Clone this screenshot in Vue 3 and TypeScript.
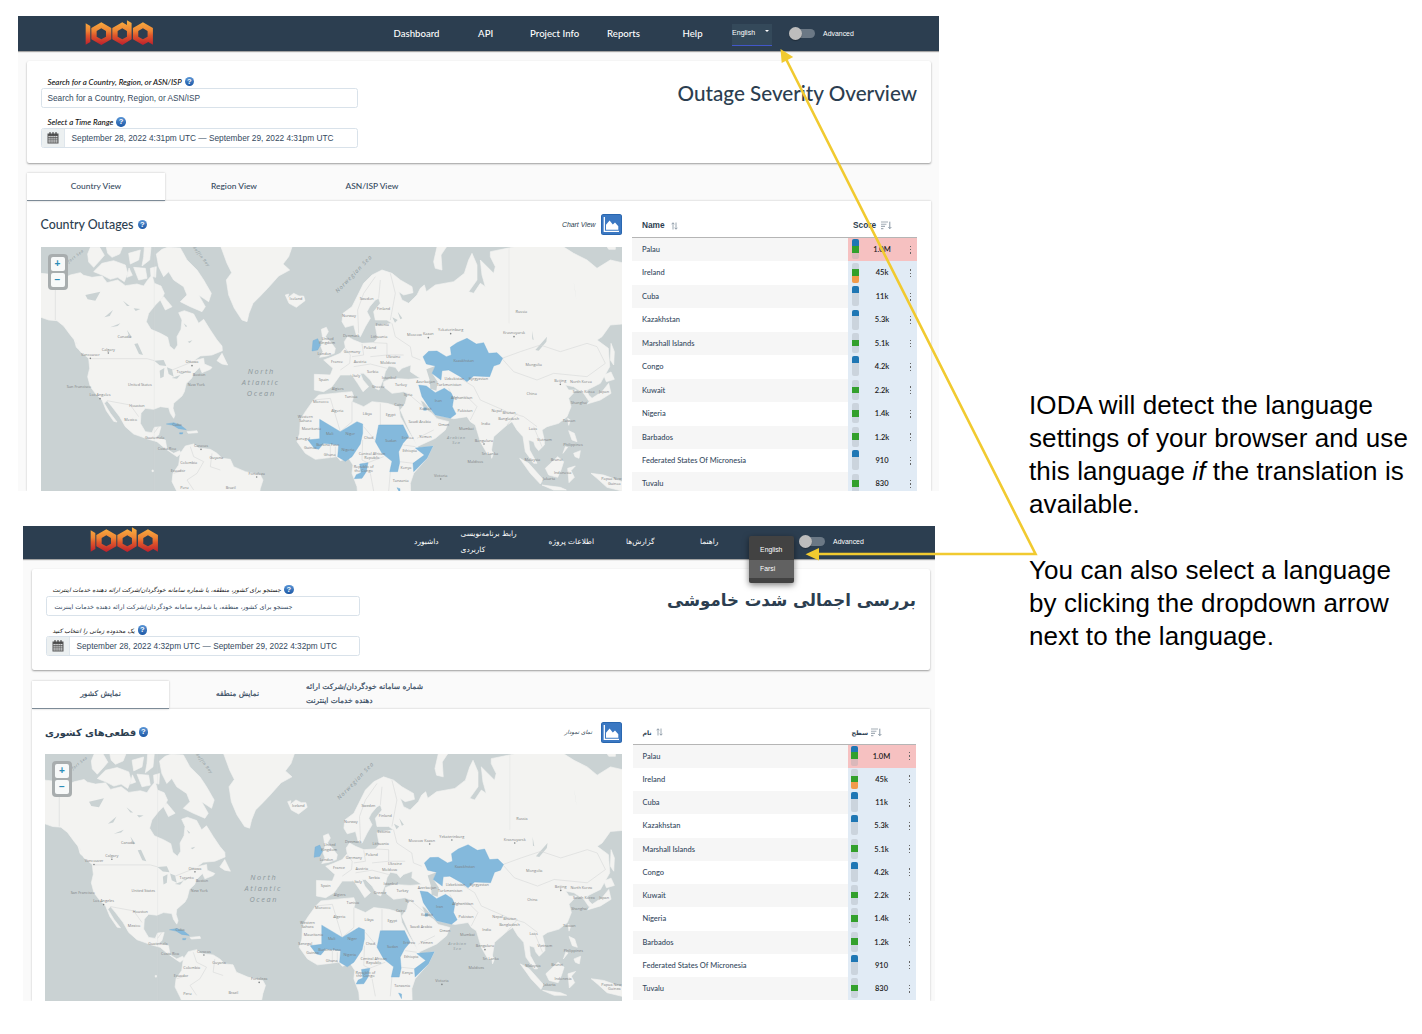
<script setup lang="ts">
interface NavItem { text: string; width: number }
interface Shot {
  id: string
  lang: 'en' | 'fa'
  nav: NavItem[]
  searchLabel: string
  searchPlaceholder: string
  timeLabel: string
  time: string
  title: string
  tabs: string[]
  heading: string
  chart: string
  name: string
  score: string
}
interface Row { name: string; score: string; bars: string[] }
interface Label { t: string; x: number; y: number; dot?: boolean }

const shots: Shot[] = [
  {
    id: 'one',
    lang: 'en',
    nav: [
      { text: 'Dashboard', width: 84.5 },
      { text: 'API', width: 52 },
      { text: 'Project Info', width: 77 },
      { text: 'Reports', width: 75.5 },
      { text: 'Help', width: 49.5 },
    ],
    searchLabel: 'Search for a Country, Region, or ASN/ISP',
    searchPlaceholder: 'Search for a Country, Region, or ASN/ISP',
    timeLabel: 'Select a Time Range',
    time: 'September 28, 2022 4:31pm UTC — September 29, 2022 4:31pm UTC',
    title: 'Outage Severity Overview',
    tabs: ['Country View', 'Region View', 'ASN/ISP View'],
    heading: 'Country Outages',
    chart: 'Chart View',
    name: 'Name',
    score: 'Score',
  },
  {
    id: 'two',
    lang: 'fa',
    nav: [
      { text: 'داشبورد', width: 46.5 },
      { text: 'رابط برنامه‌نویسی\nکاربردی', width: 88 },
      { text: 'اطلاعات پروژه', width: 77.5 },
      { text: 'گزارش‌ها', width: 74 },
      { text: 'راهنما', width: 50 },
    ],
    searchLabel: 'جستجو برای کشور، منطقه، یا شماره سامانه خودگردان/شرکت ارائه دهنده خدمات اینترنت',
    searchPlaceholder: 'جستجو برای کشور، منطقه، یا شماره سامانه خودگردان/شرکت ارائه دهنده خدمات اینترنت',
    timeLabel: 'یک محدوده زمانی را انتخاب کنید',
    time: 'September 28, 2022 4:32pm UTC — September 29, 2022 4:32pm UTC',
    title: 'بررسی اجمالی شدت خاموشی',
    tabs: ['نمایش کشور', 'نمایش منطقه', 'شماره سامانه خودگردان/شرکت ارائه\nدهنده خدمات اینترنت'],
    heading: 'قطعی‌های کشوری',
    chart: 'نمای نمودار',
    name: 'نام',
    score: 'سطح',
  },
]

const B = '#1f77b4'
const G = '#33a02c'
const O = '#f29b4b'
const N = ''
const rows: Row[] = [
  { name: 'Palau', score: '1.0M', bars: [B, G, N] },
  { name: 'Ireland', score: '45k', bars: [N, G, O] },
  { name: 'Cuba', score: '11k', bars: [B, N, N] },
  { name: 'Kazakhstan', score: '5.3k', bars: [B, N, N] },
  { name: 'Marshall Islands', score: '5.1k', bars: [N, G, N] },
  { name: 'Congo', score: '4.2k', bars: [B, N, N] },
  { name: 'Kuwait', score: '2.2k', bars: [N, G, N] },
  { name: 'Nigeria', score: '1.4k', bars: [N, G, N] },
  { name: 'Barbados', score: '1.2k', bars: [N, G, N] },
  { name: 'Federated States Of Micronesia', score: '910', bars: [B, N, N] },
  { name: 'Tuvalu', score: '830', bars: [N, G, N] },
]

const westLabels: Label[] = [
  { t: 'Canada', x: 282, y: 294 }, { t: 'Calgary', x: 234, y: 332, dot: true },
  { t: 'Vancouver', x: 180, y: 348, dot: true }, { t: 'United States', x: 329, y: 437 },
  { t: 'San Francisco', x: 146, y: 445 }, { t: 'Los Angeles', x: 209, y: 469, dot: true },
  { t: 'Houston', x: 320, y: 501 }, { t: 'Mexico', x: 301, y: 544 }, { t: 'Cuba', x: 440, y: 557 },
  { t: 'Guatemala', x: 373, y: 597 }, { t: 'Costa Rica', x: 410, y: 629 }, { t: 'Caracas', x: 512, y: 621, dot: true },
  { t: 'Colombia', x: 475, y: 671 }, { t: 'Guyana', x: 558, y: 656 }, { t: 'Ecuador', x: 443, y: 696 },
  { t: 'Peru', x: 462, y: 748 }, { t: 'Brazil', x: 601, y: 746 }, { t: 'Fortaleza', x: 679, y: 704, dot: true },
  { t: 'Ottawa', x: 485, y: 370, dot: true }, { t: 'Toronto', x: 460, y: 398 }, { t: 'Boston', x: 506, y: 409 },
  { t: 'New York', x: 498, y: 437 }, { t: 'Iceland', x: 797, y: 181 },
]
const eastLabels: Label[] = [
  { t: 'Sweden', x: 139, y: 181 }, { t: 'Finland', x: 190, y: 211 }, { t: 'Norway', x: 86, y: 230 },
  { t: 'Estonia', x: 186, y: 259 }, { t: 'Denmark', x: 93, y: 290 }, { t: 'Lithuania', x: 176, y: 295 },
  { t: 'Poland', x: 149, y: 328 }, { t: 'Germany', x: 95, y: 338 }, { t: 'Ukraine', x: 219, y: 355 },
  { t: 'United', x: 22, y: 300 }, { t: 'Kingdom', x: 20, y: 313 }, { t: 'London', x: 12, y: 345 },
  { t: 'France', x: 50, y: 368 }, { t: 'Austria', x: 119, y: 370 }, { t: 'Moldova', x: 203, y: 373 },
  { t: 'Serbia', x: 157, y: 398 }, { t: 'Italy', x: 108, y: 412 }, { t: 'Istanbul', x: 206, y: 417 },
  { t: 'Spain', x: 10, y: 422 }, { t: 'Greece', x: 174, y: 443 }, { t: 'Turkey', x: 242, y: 438 },
  { t: 'Algiers', x: 52, y: 449 }, { t: 'Tunisia', x: 92, y: 475 }, { t: 'Syria', x: 263, y: 469 },
  { t: 'Azerbaijan', x: 316, y: 429 }, { t: 'Turkmenistan', x: 386, y: 438 }, { t: 'Uzbekistan', x: 402, y: 419 },
  { t: 'Kyrgyzstan', x: 474, y: 421 }, { t: 'Kazakhstan', x: 430, y: 365 }, { t: 'Iran', x: 354, y: 486 },
  { t: 'Afghanistan', x: 424, y: 477 }, { t: 'Pakistan', x: 434, y: 515 }, { t: 'Nepal', x: 529, y: 515 },
  { t: 'Bhutan', x: 566, y: 521 }, { t: 'India', x: 496, y: 555 }, { t: 'Bangladesh', x: 565, y: 541 },
  { t: 'Mumbai', x: 438, y: 571 }, { t: 'Bengaluru', x: 491, y: 605, dot: true }, { t: 'Sri Lanka', x: 509, y: 644 },
  { t: 'Maldives', x: 465, y: 669 }, { t: 'Victoria', x: 361, y: 710, dot: true }, { t: 'Russia', x: 603, y: 220 },
  { t: 'Moscow', x: 282, y: 287 }, { t: 'Kazan', x: 324, y: 286, dot: true }, { t: 'Yekaterinburg', x: 391, y: 274, dot: true },
  { t: 'Krasnoyarsk', x: 581, y: 283, dot: true }, { t: 'Mongolia', x: 640, y: 377 }, { t: 'China', x: 634, y: 465 },
  { t: 'Beijing', x: 720, y: 426, dot: true }, { t: 'North Korea', x: 782, y: 430 }, { t: 'South Korea', x: 790, y: 458 },
  { t: 'Japan', x: 851, y: 458 }, { t: 'Shanghai', x: 776, y: 491 }, { t: 'Taiwan', x: 746, y: 545 },
  { t: 'Laos', x: 638, y: 569 }, { t: 'Vietnam', x: 672, y: 604 }, { t: 'Philippines', x: 758, y: 619 },
  { t: 'Malaysia', x: 636, y: 663 }, { t: 'Brunei', x: 709, y: 662 }, { t: 'Indonesia', x: 727, y: 703 },
  { t: 'Jakarta', x: 686, y: 721 }, { t: 'Papua New', x: 873, y: 721 }, { t: 'Guinea', x: 882, y: 735 },
  { t: 'Morocco', x: 1, y: 488 }, { t: 'Algeria', x: 51, y: 516 }, { t: 'Libya', x: 141, y: 524 },
  { t: 'Egypt', x: 211, y: 527 }, { t: 'Cairo', x: 236, y: 498 }, { t: 'Kuwait', x: 316, y: 509 },
  { t: 'Saudi Arabia', x: 298, y: 548 }, { t: 'Oman', x: 370, y: 559 }, { t: 'Yemen', x: 315, y: 594 },
  { t: 'Western', x: -45, y: 535 }, { t: 'Sahara', x: -45, y: 546 }, { t: 'Mauritania', x: -27, y: 570 },
  { t: 'Mali', x: 28, y: 584 }, { t: 'Niger', x: 90, y: 584 }, { t: 'Chad', x: 145, y: 597 },
  { t: 'Sudan', x: 212, y: 606 }, { t: 'Eritrea', x: 262, y: 596 }, { t: 'Senegal', x: -52, y: 599 },
  { t: 'Burkina Faso', x: 22, y: 617 }, { t: 'Guinea', x: -30, y: 626 }, { t: 'Nigeria', x: 83, y: 632 },
  { t: 'Ghana', x: 28, y: 649 }, { t: 'Central African', x: 155, y: 644 }, { t: 'Republic', x: 155, y: 656 },
  { t: 'Ethiopia', x: 268, y: 637 }, { t: 'Kenya', x: 257, y: 686 }, { t: 'Republic of', x: 130, y: 685 },
  { t: 'the Congo', x: 130, y: 696 }, { t: 'Tanzania', x: 241, y: 726 },
]
</script>

<template>
  <main class="slide">
    <div class="shots">
      <section v-for="s in shots" :key="s.id" class="shot" :class="[s.id, s.lang]">
        <header class="bar">
          <svg class="logo" viewBox="226 28 206 76">
            <defs>
              <linearGradient :id="'g' + s.id" x1="0" y1="30" x2="0" y2="103" gradientUnits="userSpaceOnUse">
                <stop offset="0" stop-color="#f9b040" />
                <stop offset=".42" stop-color="#ee8434" />
                <stop offset=".6" stop-color="#e0592b" />
                <stop offset="1" stop-color="#bd1f2d" />
              </linearGradient>
            </defs>
            <g :fill="`url(#g${s.id})`" fill-rule="evenodd">
              <path d="M228 38l14 8v48l-14 8z" />
              <path d="M275 35l30 17v34l-30 17-30-17V52zM275 53l-14 8v17l14 8 14-8V61z" />
              <path d="M338 35l14 8V29l14 8v49l-28 17-30-17V52zM338 53l-14 8v17l14 8 14-8V61z" />
              <path d="M400 35l30 17v50l-14-8-16 9-30-17V52zM400 53l-14 8v17l14 8 14-8V61z" />
            </g>
          </svg>
          <nav class="nav">
            <a v-for="n in s.nav" :key="n.text" :style="{ width: n.width + 'px' }">{{ n.text }}</a>
          </nav>
          <div class="langbox">
            <div v-if="s.lang === 'en'" class="select"><span>English</span><i class="caret"></i></div>
            <ul v-else class="menu"><li>English</li><li class="on">Farsi</li></ul>
          </div>
          <span class="toggle"><i></i></span>
          <span class="adv">Advanced</span>
        </header>

        <div class="card">
          <div class="form">
            <label class="lbl l1"><span>{{ s.searchLabel }}</span><b class="q">?</b></label>
            <div class="input ph"><span>{{ s.searchPlaceholder }}</span></div>
            <label class="lbl l2"><span>{{ s.timeLabel }}</span><b class="q">?</b></label>
            <div class="input range">
              <span class="cal">
                <svg viewBox="0 0 12 12" width="12" height="12">
                  <path d="M.5 1.5h11v10H.5z" fill="#555" />
                  <path d="M3 0v2.5M6 0v2.5M9 0v2.5" stroke="#333" stroke-width="1" />
                  <path d="M1.5 4.5h9M1.5 6.3h9M1.5 8.1h9M1.5 9.9h9" stroke="#e8eaeb" stroke-width="1.1" stroke-dasharray="1.3 .6" />
                </svg>
              </span>
              <span class="time">{{ s.time }}</span>
            </div>
          </div>
          <h1>{{ s.title }}</h1>
        </div>

        <div class="tabs">
          <div v-for="(t, i) in s.tabs" :key="t" class="tab" :class="{ active: i === 0 }"><span>{{ t }}</span></div>
        </div>

        <div class="panel">
          <div class="left">
            <div class="head">
              <h2>{{ s.heading }}</h2><b class="q">?</b>
              <em>{{ s.chart }}</em>
              <svg class="chartbtn" viewBox="0 0 21 21">
                <rect width="21" height="21" rx="2.5" fill="#2360a9" />
                <rect x=".7" y=".7" width="19.6" height="19.6" rx="2" fill="#3b78c2" />
                <path d="M3.3 3v14.3H18" fill="none" stroke="#fff" stroke-width="1.3" />
                <path d="M5 15.7v-5l3.6-4.2 3.2 4 2.2-1.9 3.3 3.6v3.5z" fill="#fff" />
              </svg>
            </div>
            <div class="map">
              <svg viewBox="32 21 1743 744" preserveAspectRatio="xMinYMin slice">
                <rect x="32" y="21" width="1743" height="780" fill="#cad2d3" />
                <g class="land">
                  <path d="M32 100L60 103 75 108 95 118 120 105 150 98 160 106 185 112 215 108 230 128 262 120 285 137 320 132 340 138 352 120 365 105 372 130 392 138 402 160 395 175 375 195 355 220 348 245 362 268 390 280 412 292 418 318 432 330 442 315 440 290 452 268 455 240 445 218 462 212 490 222 505 250 520 238 540 270 560 300 575 318 576 332 545 345 510 348 490 362 520 355 522 372 545 382 540 388 515 398 508 382 490 400 484 415 468 430 462 455 455 468 430 490 428 505 434 525 430 535 420 520 415 503 390 500 370 508 345 505 332 520 330 550 345 575 365 578 372 562 392 560 385 585 375 592 405 600 410 628 430 640 448 632 452 640 440 650 425 640 400 622 380 605 355 598 310 582 285 560 268 530 245 500 230 482 222 490 240 520 260 546 250 544 228 512 215 480 195 460 180 440 172 410 178 385 175 355 150 335 140 310 120 285 100 258 80 242 55 240 32 232Z" />
                  <path d="M450 640L465 618 490 612 505 624 540 628 560 640 575 655 600 658 610 680 645 695 690 705 698 720 690 745 680 800 460 800 440 755 425 725 428 700 445 675Z" />
                  <path d="M190 95L215 70 250 62 285 75 292 100 282 125 262 112 240 118 215 105ZM172 42L180 22 208 22 222 46 210 60 190 82 175 66ZM228 22H276L268 42 245 52 232 40ZM295 40L330 30 325 60 300 72ZM342 22H362L358 60 335 78 340 50ZM310 82L345 85 350 115 325 120ZM296 84L306 106 290 112ZM378 42L395 28 412 22 450 24 470 60 500 90 520 120 543 160 535 185 505 165 525 200 515 215 480 200 450 185 470 165 460 140 430 120 415 95 400 110 385 80ZM360 85L378 80 376 112 362 108ZM390 180L400 170 425 200 405 210ZM560 362L575 340 592 375 575 372ZM132 300L146 320 150 333 138 322ZM470 575L500 572 502 578 474 580ZM365 690h4v5h-4z" />
                  <path d="M572 21H785L775 50 758 72 778 90 745 108 712 145 690 168 668 190 656 220 650 245 635 240 612 205 595 165 588 120 604 98 590 70Z" />
                  <path d="M765 165L775 162 772 174 790 160 806 168 820 168 824 182 798 202 776 190Z" />
                  <g transform="translate(870 0)">
                    <path d="M-18 403L30 405 38 385 10 360 32 352 60 340 75 322 72 305 82 290 100 300 125 310 160 308 172 295 168 275 165 258 215 250 200 240 165 240 160 215 180 190 175 175 165 180 148 200 140 215 150 235 135 260 120 290 108 285 100 255 75 262 65 245 68 220 95 200 110 170 130 130 155 105 185 90 215 100 240 120 275 140 278 158 250 165 235 155 245 180 265 190 290 165 300 145 312 135 318 155 345 135 400 125 432 100 445 60 455 40 470 75 470 120 445 155 460 160 480 130 495 140 485 105 480 60 520 100 525 80 510 50 510 35 560 25 580 21H730L760 40 800 60 830 85 870 60 905 68V252L870 255 845 290 830 300 864 325 868 380 840 430 820 440 800 450 805 465 818 478 805 482 790 460 775 450 760 440 735 435 745 450 768 450 745 475 752 500 740 530 715 550 680 560 665 570 672 600 672 615 655 632 645 620 640 605 625 600 628 630 650 670 640 670 615 635 608 590 590 570 575 545 560 555 520 590 512 640 500 640 480 605 465 555 450 545 440 530 400 536 345 525 310 485 300 480 310 505 335 520 350 536 385 545 375 570 345 595 290 620 282 600 262 560 240 510 255 490 262 460 250 455 215 460 190 440 190 425 215 415 265 418 300 415 270 395 272 375 245 385 235 395 225 382 205 378 195 395 190 415 176 450 165 445 150 420 130 400 120 400 128 420 145 440 128 455 112 430 95 405 60 405 35 440 10 455-18 450Z" />
                    <path d="M-5 465L60 458 95 455 100 470 95 485 130 500 155 485 200 490 235 500 240 530 262 570 280 600 295 625 338 618 320 655 280 700 270 730 272 800H115L110 740 95 700 98 675 85 655 60 662 50 650 10 655-15 658-45 640-70 605-62 580-60 540-45 515-20 480Z" />
                    <path d="M3 268L18 262 24 275 15 290 30 305 45 325 42 340 20 348-2 352 8 335 2 320 8 300ZM350 21H378L362 45 365 90 345 85 340 65ZM872 310L882 335 880 375 870 360ZM850 405L872 396 882 418 858 425ZM865 430L872 460 840 480 800 492 815 475 845 455ZM742 535L750 540 745 556ZM510 628L520 640 514 655ZM675 685L712 650 730 665 722 690 712 712 685 705ZM598 655L625 670 668 718 660 732 630 700ZM665 735L720 742 738 750 700 750ZM742 685L765 678 752 692 762 712 746 728ZM812 700L850 705 905 725V753L860 742 830 715ZM745 572L762 580 770 605 755 600ZM760 640L780 632 776 655 764 650ZM735 620L742 622 728 640ZM860 20h25v8h-20z" />
                  </g>
                </g>
                <g class="water">
                  <path d="M165 165L210 155 195 182 172 178ZM222 232L248 210 238 228ZM240 262L270 250 262 258ZM312 312L322 310 338 345 326 342ZM372 362L400 360 408 378 388 376ZM388 392L402 384 400 410 390 415ZM410 382L425 388 430 410 415 402ZM424 414L450 405 440 416ZM446 402L464 395 458 402ZM278 182L298 198 290 198ZM290 270L305 292 298 294ZM460 250l10 8-3 4zM472 305l14-4-8 8zM310 205l20 2-14 6z" />
                  <path transform="translate(870 0)" d="M318 388L345 378 335 400 352 425 348 452 330 446 328 420ZM645 330L680 290 678 305 655 332ZM232 215L246 235 240 238ZM216 232L232 240 224 248ZM635 272L640 300 636 298ZM760 125L768 180 764 150ZM470 382L500 378 490 384ZM90 402L94 420 88 412Z" />
                </g>
                <g class="borders">
                  <path d="M75 108V240M178 356H350L372 362M425 390L470 372 486 365M230 482L300 495 325 530M372 578L385 560M480 620L490 650 520 665 500 700 470 720 490 750M545 640L540 680 570 690M430 700L460 690" />
                  <path transform="translate(870 0)" d="M115 280L112 210 130 160 165 110M175 175L180 120M210 100L225 160 210 240M215 250L225 290 270 320 275 350 300 360M75 325L90 345 88 370 60 390M125 312L130 345 95 350M160 308L200 310 200 345 150 350M200 345L250 345M100 380L150 372 200 385M545 355L600 335 660 315 720 335 800 310 830 320 855 370 800 410 700 400 650 420 580 395 547 358M420 415L460 440 480 480 560 515 610 530 650 560M400 475L440 470 470 500 450 540M400 475L385 445M560 555L590 520M-20 480L30 475 60 575M95 485V545L60 575M180 490V555M180 620L130 560M180 555H250M127 600L125 660 145 670M238 665L280 670M210 695L205 753M143 668L190 650M262 460L310 500M290 595L340 570M640 560L665 620M30 615V655M-35 600L-2 598M45 620V655M250 615L285 620M150 700L160 753" />
                  <path d="M372 21V800M1436 21V250" opacity=".4" />
                </g>
                <g class="hot">
                  <path d="M848 302L862 296 870 315 862 330 845 333ZM408 552L430 548 450 555 468 569 445 566 428 556ZM448 578h10l-2 4h-8z" />
                  <g transform="translate(870 0)">
                    <path d="M308 350L325 334 350 333 378 350 393 345 390 322 410 308 440 295 468 312 490 308 505 340 530 338 547 355 538 372 520 378 508 410 460 408 440 425 420 410 385 390 365 392 362 420 335 400 345 378 318 372Z" />
                    <path d="M295 435L318 438 345 458 372 445 392 458 400 475 396 500 407 522 390 535 345 525 325 500 305 470ZM310 503h8v8h-8zM-2 538L60 575 110 545 127 552 127 580 120 612 95 650 75 664 52 650 55 615 10 610-5 628-18 625-37 600-2 596ZM175 555H248L265 590 248 610 235 635 238 668 232 695 208 695 215 664 185 640 165 605ZM285 624L338 618 320 655 280 695 278 670 312 645ZM118 672L143 668 138 695 125 715 102 716 108 704 122 698ZM230 743l9 3v14z" />
                  </g>
                </g>
                <g class="names">
                  <g v-for="(l, i) in westLabels" :key="'w' + i">
                    <text :x="l.x" :y="l.y">{{ l.t }}</text><circle v-if="l.dot" :cx="l.x" :cy="l.y + 7" r="2.4" />
                  </g>
                  <g transform="translate(870 0)">
                    <g v-for="(l, i) in eastLabels" :key="'e' + i">
                      <text :x="l.x" :y="l.y">{{ l.t }}</text><circle v-if="l.dot" :cx="l.x" :cy="l.y + 7" r="2.4" />
                    </g>
                  </g>
                </g>
                <g class="seas">
                  <text x="693" y="402">North</text><text x="691" y="434">Atlantic</text><text x="693" y="467">Ocean</text>
                  <text class="mid" transform="translate(922 160) rotate(-46)">Norwegian Sea</text>
                  <text class="small" x="1278" y="598">Arabian</text><text class="small" x="1278" y="613">Sea</text>
                  <text class="small" transform="translate(510 52) rotate(52)">Baffin Bay</text>
                  <text class="small" transform="translate(125 62) rotate(-38)">Beaufort Sea</text>
                </g>
              </svg>
              <div class="zoomer"><span>+</span><span>−</span></div>
            </div>
          </div>

          <div class="table">
            <div class="th">
              <span class="thn"><b>{{ s.name }}</b>
                <svg width="7" height="8" viewBox="0 0 7 8"><path d="M2 7.5V.8M.5 2.3L2 .8l1.4 1.5M5 .5v6.7M3.6 5.7L5 7.2l1.5-1.5" fill="none" stroke="#8492a0" stroke-width=".8" /></svg>
              </span>
              <span class="ths"><b>{{ s.score }}</b>
                <svg width="11" height="9" viewBox="0 0 11 9"><path d="M0 1h7M0 3.2h5.4M0 5.4h4M0 7.6h2.4" stroke="#a3adb6" stroke-width="1.1" /><path d="M8.8.7v6.8M7.4 6.1l1.4 1.5 1.5-1.5" fill="none" stroke="#7b8a98" stroke-width=".9" /></svg>
              </span>
            </div>
            <div v-for="(r, i) in rows" :key="r.name" class="tr" :class="{ odd: i % 2 === 0, first: i === 0 }">
              <span class="td">{{ r.name }}</span>
              <span class="sc">
                <span class="bars"><i v-for="(c, j) in r.bars" :key="j" :style="{ background: c }"></i></span>
                <span class="val">{{ r.score }}</span>
                <span class="dots"><i></i><i></i><i></i></span>
              </span>
            </div>
          </div>
        </div>
      </section>
    </div>

    <aside class="notes">
      <p><span>IODA will detect the language</span><span>settings of your browser and use</span><span>this language <i>if</i> the translation is</span><span>available.</span></p>
      <p><span>You can also select a language</span><span>by clicking the dropdown arrow</span><span>next to the language.</span></p>
    </aside>

    <svg class="arrows" viewBox="0 0 1422 1034" width="1422" height="1034">
      <path d="M786 59L1035.500 554H816" fill="none" stroke="#f1ca30" stroke-width="2.6" />
      <path d="M780.500 49l1.200 14 11.500-6zM805.500 554.300l13.500-6.300v12.500z" fill="#f1ca30" />
    </svg>
  </main>
</template>

<style>
body { background: #fff; }
</style>

<style scoped>
* { box-sizing: border-box; }
.slide { position: relative; width: 1422px; height: 1034px; overflow: hidden; display: flex; background: #fff; }
.shots { width: 1029px; flex: none; padding-top: 16px; }
h1, h2, p, ul { margin: 0; padding: 0; }

.shot {
  font-family: Lato, "DejaVu Sans", sans-serif; color: #2c3e50; background: #fafafa; overflow: hidden;
  display: flex; flex-direction: column; height: 475px;
}
.one { margin-left: 18px; width: 921px; --pad: 9px; --bar: 35px; --card: 102px; --cardtop: 10px; --tabtop: 10px; --tabh: 28px; --tabw: 138px; --cw: 904px; --row: 23.45px; --mapw: 581px; --inner: 13.500px; --logo: 67px; --nav: 240px; --inw: 317px; }
.two { margin: 35px 0 0 23px; width: 912px; --pad: 9px; --bar: 33px; --card: 101px; --cardtop: 10px; --tabtop: 11px; --tabh: 28px; --tabw: 137px; --cw: 898px; --row: 23.25px; --mapw: 577px; --inner: 13px; --logo: 66.500px; --nav: 256px; --inw: 314.500px; }

.bar { height: var(--bar); flex: none; background: #2c3e50; display: flex; align-items: center; box-shadow: 0 1px 1px rgba(0, 0, 0, .35); position: relative; z-index: 2; }
.logo { width: 68.600px; height: 25.300px; margin: -2px 0 0 var(--logo); flex: none; }
.two .logo { margin-top: -5px; }
.nav { display: flex; align-items: center; margin-left: var(--nav); height: 100%; }
.nav a { color: #fff; font-size: 9.600px; font-weight: 500; line-height: 12px; white-space: pre; }
.two .nav a { font-family: "DejaVu Sans", sans-serif; font-size: 7.400px; line-height: 16px; direction: rtl; text-align: left; display: flex; justify-content: flex-end; margin-top: -1px; }
.langbox { width: 57px; height: 100%; flex: none; position: relative; }
.two .langbox { width: 49px; }
.select { width: 39.500px; height: 22px; margin-top: 8px; background: #34495a; border-bottom: 1.200px solid #4257c9; display: flex; justify-content: space-between; padding: 3px 3px 0 0; color: #fff; font: 500 7px/11px "Liberation Sans", sans-serif; }
.caret { border: 2px solid transparent; border-top-color: #fff; margin-top: 3px; height: 0; }
.menu { position: absolute; left: -1px; top: 10px; width: 45px; height: 47px; list-style: none; background: #424242; border-radius: 2px; box-shadow: 0 2px 6px rgba(0, 0, 0, .5); padding-top: 5px; color: #fff; font: 6.800px/18.500px "Liberation Sans", sans-serif; z-index: 3; }
.menu li { padding-left: 11px; height: 18.500px; }
.menu .on { background: #616161; }
.toggle { width: 26px; height: 9px; border-radius: 5px; background: #6b7885; position: relative; flex: none; }
.toggle i { position: absolute; left: 0; top: -2px; width: 13px; height: 13px; border-radius: 50%; background: #bdbdbd; box-shadow: 0 1px 1px rgba(0, 0, 0, .3); }
.adv { margin-left: 8px; color: #fff; font: 6.900px "Liberation Sans", sans-serif; }
.two .toggle, .two .adv { margin-top: -3px; }

.card { margin: var(--cardtop) 0 0 var(--pad); width: var(--cw); height: var(--card); flex: none; background: #fff; display: flex; justify-content: space-between; border-radius: 2px; box-shadow: 0 1px 2px rgba(0, 0, 0, .38); padding: 15px 14px 0 13.500px; }
.form { width: var(--inw); }
.lbl { display: flex; align-items: center; gap: 3px; height: 11px; padding-left: 7px; font-size: 7.950px; font-style: italic; font-weight: 500; color: #111; white-space: nowrap; }
.l2 { margin-top: 8.500px; }
.q { width: 9.500px; height: 9.500px; border-radius: 50%; background: linear-gradient(#5b96d6, #1b57a5); color: #fff; font: 700 7.500px/9.500px "Liberation Sans", sans-serif; text-align: center; flex: none; }
.input { height: 20px; margin-top: 1px; border: 1px solid #d9e2ea; border-radius: 2.500px; background: #fff; display: flex; align-items: center; font: 8.250px "Liberation Sans", sans-serif; color: #34495e; white-space: nowrap; }
.range { margin-top: .5px; }
.ph { padding-left: 6px; }
.time { padding-left: 6.500px; font-size: 8.300px; }
.two .time { font-size: 8.250px; }
.cal { width: 23.500px; height: 100%; background: #ecf0f1; border-right: 1px solid #dfe6ec; display: flex; align-items: center; justify-content: center; }
.card h1 { font-size: 20.650px; font-weight: 500; line-height: 30px; margin-top: 2px; white-space: nowrap; }
.fa .lbl { font-family: "DejaVu Sans", sans-serif; font-size: 6.100px; }
.fa .lbl span, .fa .ph span { direction: rtl; }
.fa .ph { font: 6.350px "DejaVu Sans", sans-serif; padding-left: 8px; }
.fa .card h1 { font: 700 16.600px/30px "DejaVu Sans", sans-serif; direction: rtl; margin-top: 2px; }

.tabs { margin: var(--tabtop) 0 0 var(--pad); height: var(--tabh); display: flex; flex: none; position: relative; z-index: 1; }
.tab { width: var(--tabw); height: 100%; display: flex; align-items: center; justify-content: center; padding-bottom: 3px; font-size: 8.400px; font-weight: 500; white-space: pre; color: #34495e; }
.tab.active { padding-bottom: 1.500px; background: #fff; border-bottom: 1.500px solid #7d8b97; box-shadow: 0 0 2px rgba(0, 0, 0, .22); }
.fa .tab { font: 500 7.500px/14px "DejaVu Sans", sans-serif; direction: rtl; -webkit-text-stroke: .2px #34495e; }
.fa .tab:last-child { text-align: left; width: 117px; }

.panel { margin-left: var(--pad); width: var(--cw); flex: 1; min-height: 0; background: #fff; display: flex; box-shadow: 0 0 2px rgba(0, 0, 0, .22); padding-left: var(--inner); }
.left { width: var(--mapw); flex: none; }
.head { height: 46px; display: flex; align-items: center; padding-top: 1px; }
.two .head { height: 45px; }
.head h2 { font-size: 12.400px; font-weight: 500; margin-right: 4px; white-space: nowrap; }
.head em { margin-left: auto; font: italic 6.900px "Liberation Sans", sans-serif; margin-right: 5px; }
.chartbtn { width: 21px; height: 21px; }
.fa .head h2 { font: 700 9.850px "DejaVu Sans", sans-serif; direction: rtl; margin-right: 2.500px; }
.fa .head em { font: italic 5.700px "DejaVu Sans", sans-serif; direction: rtl; margin-right: 9px; }
.map { position: relative; height: 248px; overflow: hidden; background: #cad2d3; }
.map > svg { display: block; width: 100%; height: 248px; }
.two .map > svg { height: 246px; }
.land path { fill: #f3f3f1; stroke: #f3f3f1; stroke-width: 2; stroke-linejoin: round; }
.water path { fill: #cad2d3; }
.borders path { fill: none; stroke: #d6d8d8; stroke-width: 1.800; }
.hot path { fill: #84b9dc; stroke: #6aa9d4; stroke-width: 1; }
.names { font: 11.500px "Open Sans", sans-serif; fill: #7c8082; text-anchor: middle; }
.seas { font: italic 22px "Open Sans", sans-serif; fill: #8d989c; letter-spacing: 5px; text-anchor: middle; }
.seas .mid { font-size: 17px; letter-spacing: 3px; text-anchor: start; }
.seas .small { font-size: 12px; letter-spacing: 2px; }
.zoomer { position: absolute; left: 7px; top: 7px; width: 20px; height: 36px; border-radius: 4px; background: #a8adae; padding: 3px; display: flex; flex-direction: column; gap: 2px; }
.zoomer span { flex: 1; background: #f7f9f9; border-radius: 2px; color: #2a8cb8; font: 700 10px/14px "Liberation Sans", sans-serif; text-align: center; }

.table { margin-left: 10.500px; width: 285px; flex: none; }
.two .table { width: 283px; }
.th { height: 37px; border-bottom: 1.500px solid #b5b5b5; display: flex; align-items: flex-end; padding: 0 0 6px 10px; font: 8.300px/11px "Liberation Sans", sans-serif; }
.two .th { height: 35.500px; font: 6.200px/11px "DejaVu Sans", sans-serif; }
.thn { width: 211px; display: flex; align-items: center; gap: 6px; }
.two .thn { width: 209px; gap: 4px; }
.ths { display: flex; align-items: center; gap: 5px; }
.two .ths { gap: 3px; }
.tr { height: var(--row); display: flex; font-size: 7.500px; font-weight: 500; line-height: var(--row); }
.odd { background: #f6f6f6; }
.td { flex: 1; padding-left: 10px; white-space: nowrap; color: #34495e; }
.sc { width: 69px; background: #e1ebf5; display: flex; align-items: center; color: #222; }
.two .sc { width: 68px; }
.first .sc { background: #f6c1c1; }
.bars { margin: -1px 0 0 3.500px; width: 7px; height: 20px; border-radius: 2px; overflow: hidden; display: flex; flex-direction: column; background: rgba(160, 165, 170, .32); }
.bars i { flex: 1; }
.val { width: 47px; text-align: center; font-weight: 600; }
.dots { display: flex; flex-direction: column; gap: 2px; width: 2px; margin-left: 4px; }
.dots i { width: 1.300px; height: 1.300px; background: #666; }

.notes { padding-top: 389px; font: 26px/33px "Liberation Sans", sans-serif; letter-spacing: .1px; color: #000; }
.notes p { margin-bottom: 33px; }
.notes span { display: block; white-space: nowrap; }
.arrows { position: absolute; left: 0; top: 0; z-index: 5; }
</style>
